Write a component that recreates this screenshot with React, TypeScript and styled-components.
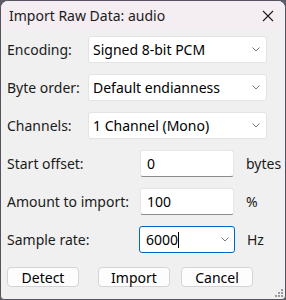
import styled, { createGlobalStyle } from "styled-components";

const GlobalStyle = createGlobalStyle`
  html, body {
    margin: 0;
    padding: 0;
    background: #5d5b68;
  }
  body {
    font-family: "Noto Sans", "Open Sans", sans-serif;
    font-size: 14px;
    color: #1b1b1b;
  }
`;

const Window = styled.div`
  width: 286px;
  height: 300px;
  box-sizing: border-box;
  border: 1px solid #55535f;
  border-radius: 8px 8px 4px 4px;
  background: #f0f0f0;
  overflow: hidden;
  position: relative;
  display: flex;
  flex-direction: column;
`;

const TitleBar = styled.div`
  height: 29px;
  background: #f4edf2;
  display: flex;
  align-items: center;
  justify-content: space-between;
  padding: 0 8px 0 8px;
`;

const Title = styled.span`
  font-size: 14px;
  color: #1b1b1b;
`;

const CloseButton = styled.div`
  width: 14px;
  height: 14px;
  margin-right: 2px;
  display: flex;
  align-items: center;
  justify-content: center;
`;

const Body = styled.div`
  padding: 6px 0 0 6px;
  display: flex;
  flex-direction: column;
  gap: 11px;
`;

const Row = styled.div`
  display: flex;
  align-items: center;
  height: 27px;
`;

const Label = styled.span<{ $width: number }>`
  width: ${(p) => p.$width}px;
  flex: none;
`;

const Box = styled.div<{ $width: number; $focused?: boolean }>`
  width: ${(p) => p.$width}px;
  height: 27px;
  box-sizing: border-box;
  background: #ffffff;
  border: 1px solid ${(p) => (p.$focused ? "#0067c0" : "#e3e3e3")};
  border-radius: 3px;
  display: flex;
  align-items: center;
  padding: ${(p) => (p.$focused ? "0 5px 0 6px" : "0 6px 0 4px")};
  color: #000;
`;

const TextBox = styled.div<{ $width: number }>`
  width: ${(p) => p.$width}px;
  height: 27px;
  box-sizing: border-box;
  background: #ffffff;
  border: 1px solid #e6e6e6;
  border-bottom: 1px solid #8b8b8b;
  border-radius: 3px;
  display: flex;
  align-items: center;
  padding: 0 6px;
  color: #000;
`;

const Value = styled.span`
  flex: 1;
  display: flex;
  align-items: center;
`;

const Caret = styled.span`
  display: inline-block;
  width: 1px;
  height: 16px;
  background: #000;
`;

const Unit = styled.span`
  margin-left: 12px;
`;

const ButtonRow = styled.div`
  display: flex;
  padding: 14px 0 0 6px;
`;

const Button = styled.div<{ $gap: number }>`
  width: 72px;
  height: 20px;
  box-sizing: border-box;
  margin-left: ${(p) => p.$gap}px;
  background: #fdfdfd;
  border: 1px solid #d4d4d4;
  border-radius: 4px;
  display: flex;
  align-items: center;
  justify-content: center;
  color: #000;
`;

const Grip = styled.svg`
  position: absolute;
  right: 1px;
  bottom: 1px;
`;

const Chevron = () => (
  <svg width="8" height="5" viewBox="0 0 8 5">
    <path d="M0.5 0.5 L4 4 L7.5 0.5" fill="none" stroke="#7a7a7a" strokeWidth="1" />
  </svg>
);

const Select = (props: { width: number; value: string; focused?: boolean; caret?: boolean }) => (
  <Box $width={props.width} $focused={props.focused}>
    <Value>
      {props.value}
      {props.caret && <Caret />}
    </Value>
    <Chevron />
  </Box>
);

export default function App() {
  return (
    <>
      <GlobalStyle />
      <Window>
        <TitleBar>
          <Title>Import Raw Data: audio</Title>
          <CloseButton>
            <svg width="12" height="12" viewBox="0 0 12 12">
              <path d="M1 1 L11 11 M11 1 L1 11" stroke="#1b1b1b" strokeWidth="1.1" />
            </svg>
          </CloseButton>
        </TitleBar>
        <Body>
          <Row>
            <Label $width={81}>Encoding:</Label>
            <Select width={179} value="Signed 8-bit PCM" />
          </Row>
          <Row>
            <Label $width={81}>Byte order:</Label>
            <Select width={179} value="Default endianness" />
          </Row>
          <Row>
            <Label $width={81}>Channels:</Label>
            <Select width={179} value="1 Channel (Mono)" />
          </Row>
          <Row>
            <Label $width={133}>Start offset:</Label>
            <TextBox $width={94}>0</TextBox>
            <Unit>bytes</Unit>
          </Row>
          <Row>
            <Label $width={133}>Amount to import:</Label>
            <TextBox $width={94}>100</TextBox>
            <Unit>%</Unit>
          </Row>
          <Row>
            <Label $width={132}>Sample rate:</Label>
            <Select width={96} value="6000" focused caret />
            <Unit>Hz</Unit>
          </Row>
        </Body>
        <ButtonRow>
          <Button $gap={0}>Detect</Button>
          <Button $gap={19}>Import</Button>
          <Button $gap={11}>Cancel</Button>
        </ButtonRow>
        <Grip width="10" height="10" viewBox="0 0 10 10">
          <g fill="#9a9a9a">
            <rect x="7" y="1" width="2" height="2" />
            <rect x="4" y="4" width="2" height="2" />
            <rect x="7" y="4" width="2" height="2" />
            <rect x="1" y="7" width="2" height="2" />
            <rect x="4" y="7" width="2" height="2" />
            <rect x="7" y="7" width="2" height="2" />
          </g>
        </Grip>
      </Window>
    </>
  );
}
